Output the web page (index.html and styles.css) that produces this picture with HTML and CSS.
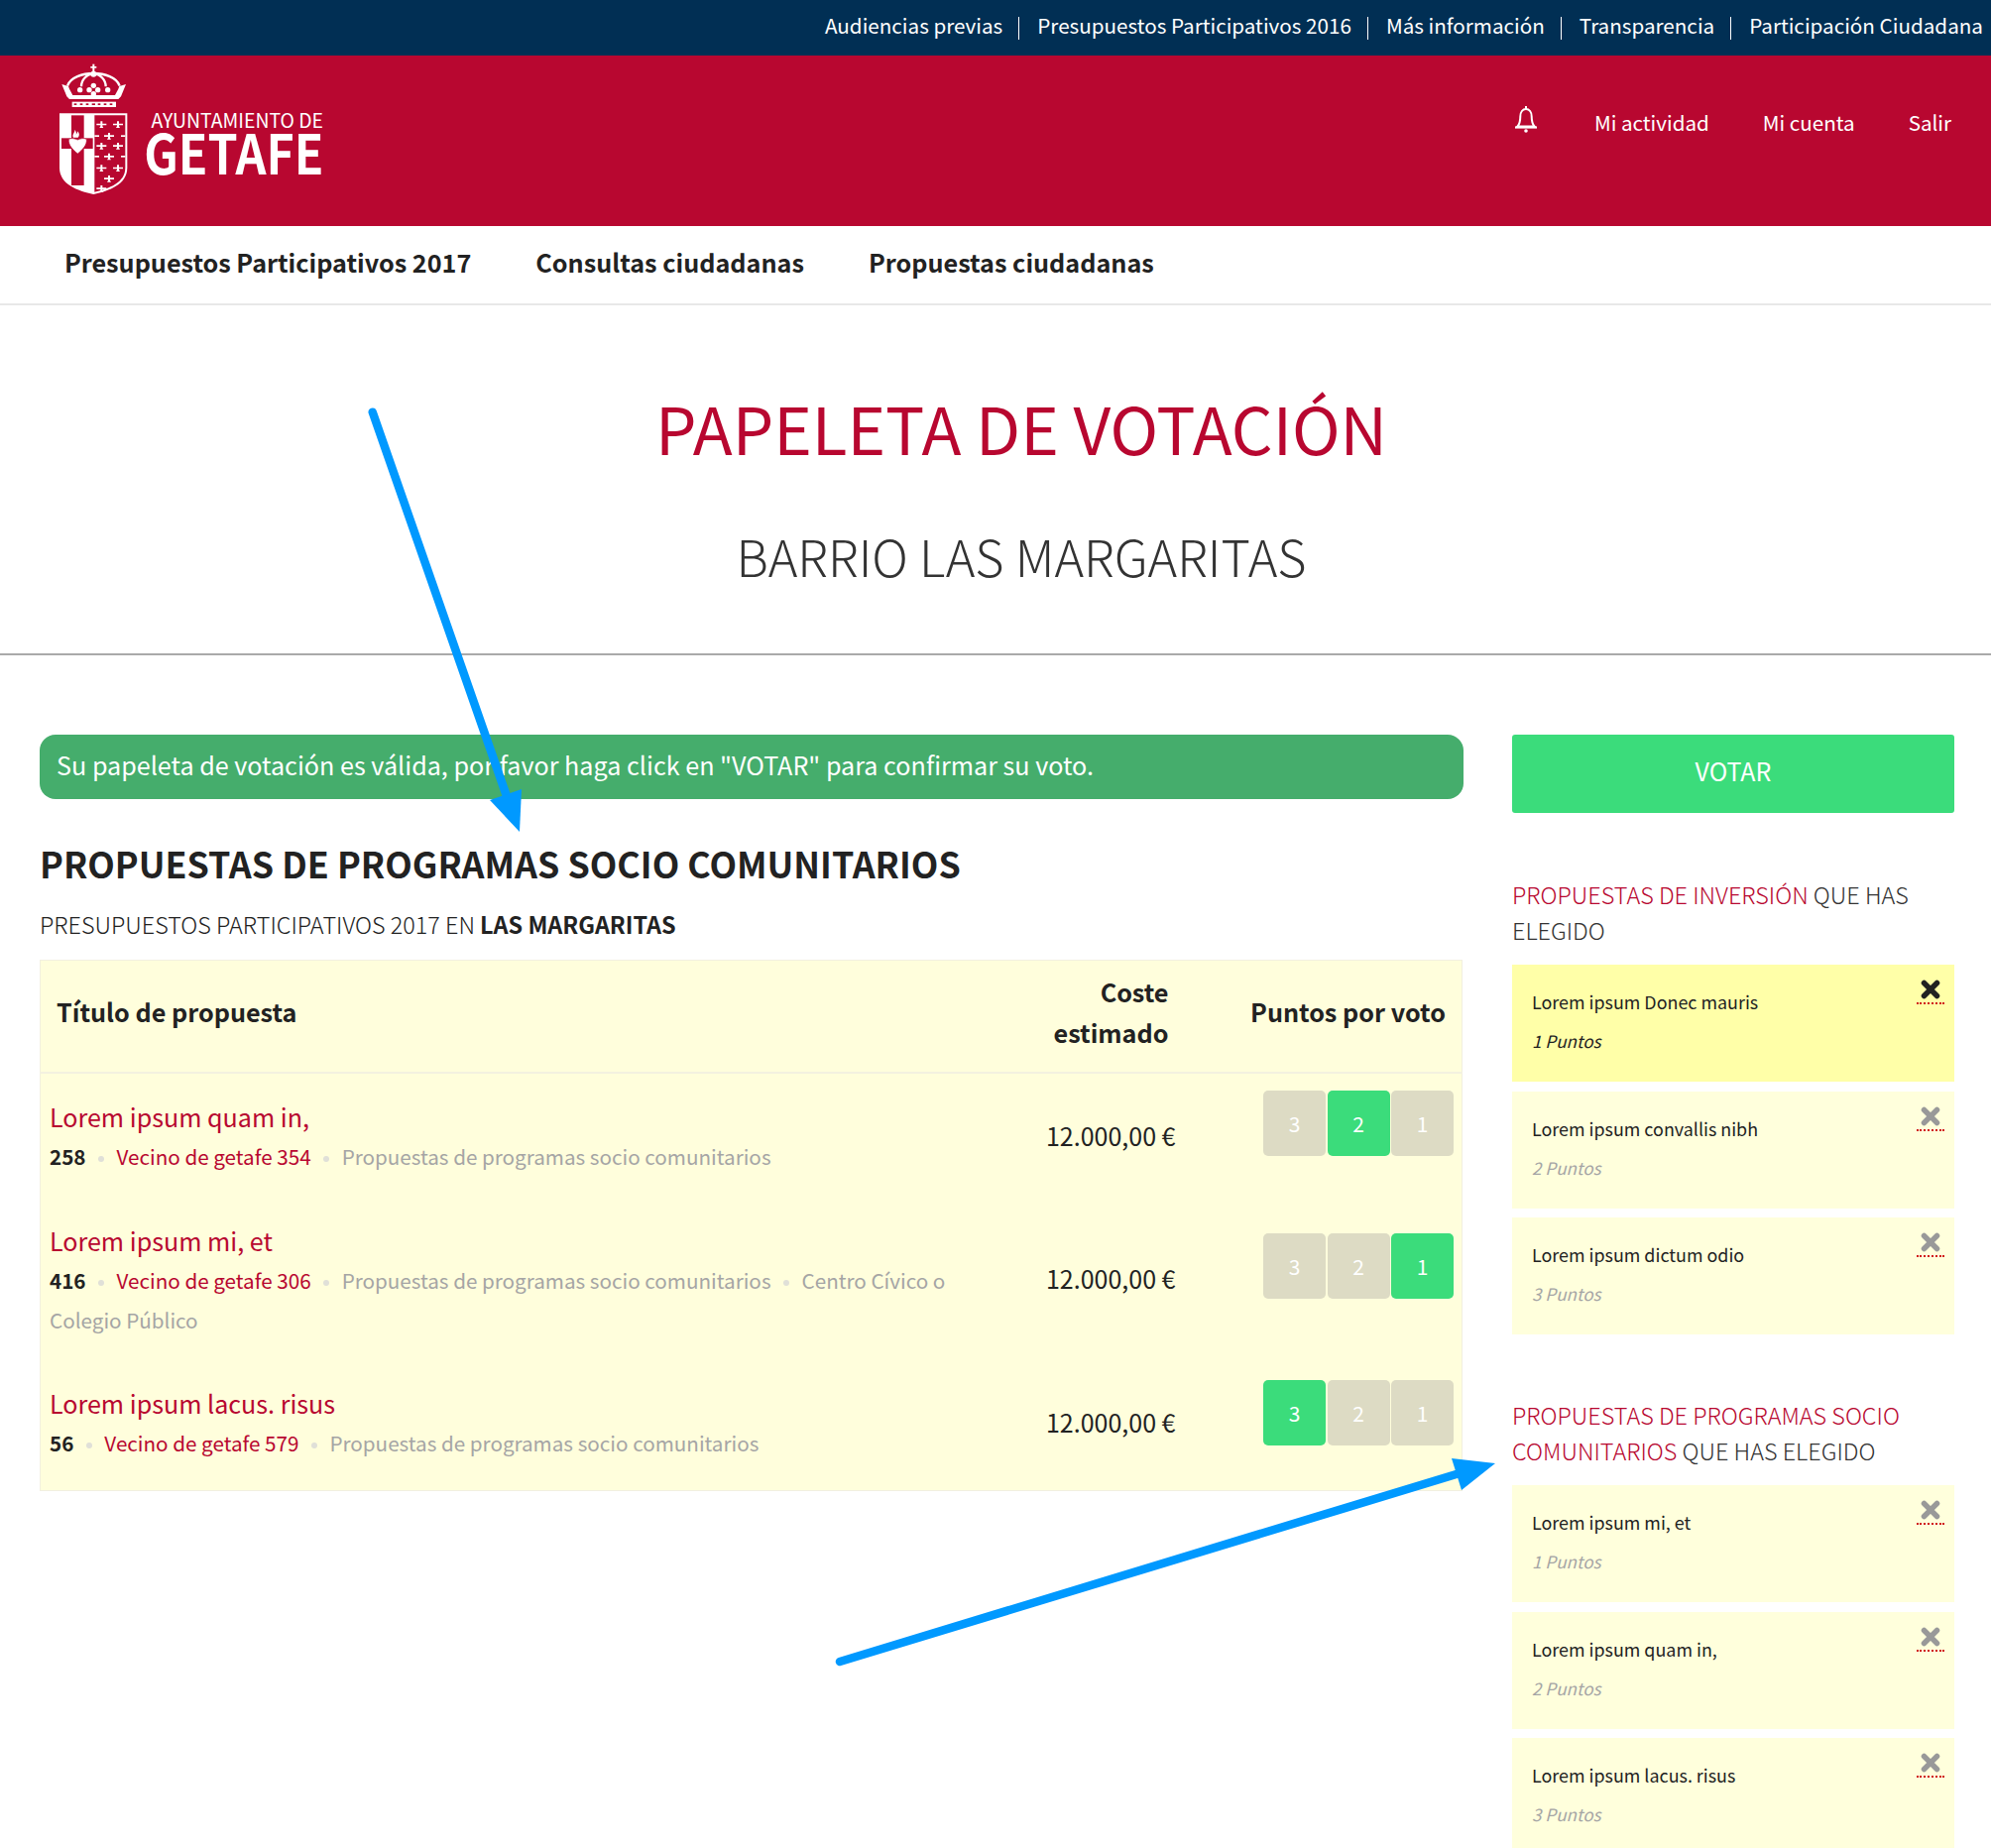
FILE: index.html
```html
<!DOCTYPE html>
<html lang="es">
<head>
<meta charset="utf-8">
<title>Papeleta de votación</title>
<link rel="stylesheet" href="styles.css">
</head>
<body>
<div class="topbar">
  <a>Audiencias previas</a><i></i><a>Presupuestos Participativos 2016</a><i></i><a>Más información</a><i></i><a>Transparencia</a><i></i><a>Participación Ciudadana</a>
</div>
<header class="brand">
  <div class="logo">
    <svg class="shield" viewBox="0 0 270 450" width="90" height="150">
      <defs>
        <path id="pl" d="M141 -9h6v7h12v5h-12v3l3 5h-12l3-5v-3h-12v-5h12z"/>
      </defs>
      <g fill="#fff">
        <rect x="130" y="26" width="6" height="24"/><rect x="124" y="33" width="18" height="5"/>
        <circle cx="133" cy="56" r="9"/>
      </g>
      <g fill="none" stroke="#fff" stroke-width="7">
        <path d="M54 92C62 66 100 54 133 54s71 12 79 38"/>
        <path d="M96 94c0-20 16-38 37-38s37 18 37 38"/>
      </g>
      <g fill="#fff">
        <path d="M37 87l20 6 3 8 10 19h128l10-19 3-8 20-6-15 37-8 8H60l-8-8z"/>
        <circle cx="92" cy="104" r="8"/><circle cx="176" cy="104" r="8"/><circle cx="133" cy="91" r="8"/><circle cx="120" cy="104" r="8"/><circle cx="146" cy="104" r="8"/><circle cx="133" cy="116" r="8"/>
        <rect x="68" y="140" width="133" height="16"/>
        <path d="M30 175h205v165c0 50-55 70-102 80-48-10-103-30-103-80z"/>
      </g>
      <g fill="#b80730">
        <rect x="74" y="145" width="8" height="5"/><rect x="92" y="145" width="8" height="5"/><rect x="110" y="145" width="8" height="5"/><rect x="128" y="145" width="10" height="5"/><rect x="146" y="145" width="8" height="5"/><rect x="164" y="145" width="8" height="5"/><rect x="182" y="145" width="8" height="5"/>
        <path d="M136 181h93v159c0 45-49 63-93 73z"/>
        <rect x="66" y="181" width="38" height="212"/>
        <rect x="36" y="250" width="95" height="32"/>
      </g>
      <path d="M58 253c8-4 18-2 27 2 9-4 19-6 27-2 2 18-12 32-27 44-15-12-29-26-27-44z" fill="#fff" stroke="#b80730" stroke-width="2"/>
      <path d="M72 248c-5-9 4-14 5-24 3 6 5 10 3 15 3-3 5-7 5-10 6 7 6 15 1 19z" fill="#fff"/>
      <g fill="#fff">
        <use href="#pl" y="208" x="13"/><use href="#pl" y="208" x="63"/>
        <use href="#pl" y="243" x="36"/>
        <rect x="136" y="241" width="14" height="5"/><rect x="216" y="241" width="13" height="5"/>
        <use href="#pl" y="273" x="13"/><use href="#pl" y="273" x="63"/>
        <use href="#pl" y="305" x="36"/>
        <rect x="136" y="303" width="14" height="5"/><rect x="216" y="303" width="13" height="5"/>
        <use href="#pl" y="340" x="13"/><use href="#pl" y="340" x="63"/>
        <use href="#pl" y="372" x="36"/>
        <use href="#pl" y="402" x="13"/>
      </g>
    </svg>
    <div class="logo-text">
      <span class="logo-small">AYUNTAMIENTO DE</span>
      <span class="logo-big">GETAFE</span>
    </div>
  </div>
  <nav class="user-nav">
    <svg class="bell" viewBox="0 0 24 28" width="24" height="28"><path d="M12 1v3M3.500 21.500c2.500-3 2.800-6 2.800-10 0-4.500 2.400-7.500 5.700-7.500s5.700 3 5.700 7.500c0 4 .3 7 2.800 10z" fill="none" stroke="#fff" stroke-width="2"/><path d="M1 22.500h22" stroke="#fff" stroke-width="2.200"/><circle cx="12" cy="26" r="1.800" fill="#fff"/></svg>
    <a>Mi actividad</a><a>Mi cuenta</a><a>Salir</a>
  </nav>
</header>
<nav class="mainnav">
  <a>Presupuestos Participativos 2017</a><a>Consultas ciudadanas</a><a>Propuestas ciudadanas</a>
</nav>
<section class="hero">
  <h1>PAPELETA DE VOTACIÓN</h1>
  <h2>BARRIO LAS MARGARITAS</h2>
</section>
<main class="layout">
  <div class="left">
    <div class="alert">Su papeleta de votación es válida, por favor haga click en "VOTAR" para confirmar su voto.</div>
    <h3 class="section-title">PROPUESTAS DE PROGRAMAS SOCIO COMUNITARIOS</h3>
    <p class="subtitle">PRESUPUESTOS PARTICIPATIVOS 2017 EN <strong>LAS MARGARITAS</strong></p>
    <table class="ballot">
      <thead>
        <tr><th class="th-title">Título de propuesta</th><th class="th-cost">Coste estimado</th><th class="th-pts">Puntos por voto</th></tr>
      </thead>
      <tbody>
        <tr class="row-first">
          <td class="td-title"><a class="prop">Lorem ipsum quam in,</a>
            <div class="meta"><b>258</b><u></u><a>Vecino de getafe 354</a><u></u><span>Propuestas de programas socio comunitarios</span></div></td>
          <td class="td-cost">12.000,00 €</td>
          <td class="td-pts"><div class="votes"><span>3</span><span class="on">2</span><span>1</span></div></td>
        </tr>
        <tr class="row-mid">
          <td class="td-title"><a class="prop">Lorem ipsum mi, et</a>
            <div class="meta"><b>416</b><u></u><a>Vecino de getafe 306</a><u></u><span>Propuestas de programas socio comunitarios</span><u></u><span>Centro Cívico o Colegio Público</span></div></td>
          <td class="td-cost">12.000,00 €</td>
          <td class="td-pts"><div class="votes"><span>3</span><span>2</span><span class="on">1</span></div></td>
        </tr>
        <tr class="row-last">
          <td class="td-title"><a class="prop">Lorem ipsum lacus. risus</a>
            <div class="meta"><b>56</b><u></u><a>Vecino de getafe 579</a><u></u><span>Propuestas de programas socio comunitarios</span></div></td>
          <td class="td-cost">12.000,00 €</td>
          <td class="td-pts"><div class="votes"><span class="on">3</span><span>2</span><span>1</span></div></td>
        </tr>
      </tbody>
    </table>
  </div>
  <aside class="right">
    <a class="vote-btn">VOTAR</a>
    <h4 class="side-title"><em>PROPUESTAS DE INVERSIÓN</em> QUE HAS ELEGIDO</h4>
    <div class="card hot"><p>Lorem ipsum Donec mauris</p><small>1 Puntos</small><a class="x"><svg viewBox="0 0 20 20" width="20" height="20"><path d="M3.500 3.500l13 13M16.500 3.500l-13 13"/></svg></a></div>
    <div class="card"><p>Lorem ipsum convallis nibh</p><small>2 Puntos</small><a class="x"><svg viewBox="0 0 20 20" width="20" height="20"><path d="M3.500 3.500l13 13M16.500 3.500l-13 13"/></svg></a></div>
    <div class="card"><p>Lorem ipsum dictum odio</p><small>3 Puntos</small><a class="x"><svg viewBox="0 0 20 20" width="20" height="20"><path d="M3.500 3.500l13 13M16.500 3.500l-13 13"/></svg></a></div>
    <h4 class="side-title second"><em>PROPUESTAS DE PROGRAMAS SOCIO COMUNITARIOS</em> QUE HAS ELEGIDO</h4>
    <div class="card"><p>Lorem ipsum mi, et</p><small>1 Puntos</small><a class="x"><svg viewBox="0 0 20 20" width="20" height="20"><path d="M3.500 3.500l13 13M16.500 3.500l-13 13"/></svg></a></div>
    <div class="card"><p>Lorem ipsum quam in,</p><small>2 Puntos</small><a class="x"><svg viewBox="0 0 20 20" width="20" height="20"><path d="M3.500 3.500l13 13M16.500 3.500l-13 13"/></svg></a></div>
    <div class="card"><p>Lorem ipsum lacus. risus</p><small>3 Puntos</small><a class="x"><svg viewBox="0 0 20 20" width="20" height="20"><path d="M3.500 3.500l13 13M16.500 3.500l-13 13"/></svg></a></div>
  </aside>
</main>
<svg class="arrows" viewBox="0 0 2008 1864" width="2008" height="1864">
  <path d="M375.700 415.700L512 806M847 1676L1472 1486" fill="none" stroke="#0099ff" stroke-width="8.500" stroke-linecap="round"/>
  <path d="M526 796L494 807L524 839z" fill="#0099ff"/>
  <path d="M1464 1471L1508 1476L1474 1503z" fill="#0099ff"/>
</svg>
</body>
</html>
```
FILE: styles.css
```css
* { box-sizing: border-box; }
html, body { margin: 0; padding: 0; }
body {
  position: relative;
  height: 1864px;
  overflow: hidden;
  background: #fff;
  color: #222;
  font-family: "Noto Sans CJK SC", "Noto Sans", sans-serif;
  font-size: 21px;
}
.topbar {
  height: 56px;
  background: #012f54;
  color: #fff;
  display: flex;
  justify-content: flex-end;
  align-items: center;
  font-size: 20.650px;
  padding: 0 8px 7px 0;
}
.topbar i { width: 1px; height: 23px; margin: 7px 18px 0 16px; background: #fff; }
.brand {
  height: 172px;
  background: #b80730;
  display: flex;
  justify-content: space-between;
  color: #fff;
}
.logo { display: flex; padding-left: 50px; }
.shield { display: block; }
.logo-text { width: 179px; margin: 53px 0 0 7px; display: flex; flex-direction: column; align-items: flex-end; }
.logo-small { font-size: 19.400px; line-height: 24px; white-space: nowrap; }
.logo-big { font-size: 55px; line-height: 54px; margin-top: -8px; font-weight: 700; transform: scaleX(.878); transform-origin: right center; }
.user-nav { display: flex; align-items: center; padding-right: 40px; height: 133px; font-size: 20.600px; gap: 54px; }
.bell { margin-right: 3px; margin-top: -6px; }
.mainnav {
  height: 80px;
  border-bottom: 2px solid #e8e8e8;
  display: flex;
  align-items: center;
  gap: 65px;
  padding: 0 0 6px 65px;
  font-size: 25.200px;
  font-weight: 700;
}
.hero { height: 353px; padding-left: 52px; border-bottom: 2px solid #aaa; text-align: center; }
.hero h1 { margin: 0; padding-top: 78px; font-size: 65.600px; line-height: 90px; font-weight: 400; color: #b80730; }
.hero h2 { margin: 50px 0 0; font-size: 50.400px; line-height: 70px; font-weight: 300; color: #333; }
.layout { display: flex; gap: 49px; padding: 80px 37px 0 40px; }
.left { width: 1436px; flex: none; }
.right { width: 446px; flex: none; }
.alert {
  height: 65px;
  background: #45ad6c;
  color: #fff;
  border-radius: 16px;
  padding: 0 17px;
  font-size: 25.150px;
  line-height: 61px;
}
.section-title { margin: 40px 0 0; font-size: 35.800px; line-height: 48px; font-weight: 700; color: #222; }
.subtitle { margin: 18px 0 0; font-size: 23.400px; line-height: 40px; font-weight: 300; color: #222; }
.subtitle strong { font-weight: 700; }
.ballot {
  margin-top: 16px;
  width: 1434px;
  table-layout: fixed;
  border-collapse: collapse;
  background: #fffedc;
  border: 1px solid #f2f0e0;
}
.ballot th { font-size: 25.200px; line-height: 41px; font-weight: 700; padding: 8px 16px 16px; height: 113px; border-bottom: 2px solid #f3f1e0; }
.th-title { text-align: left; width: 960px; }
.th-cost { text-align: right; width: 195px; padding-right: 17px !important; }
.th-pts { text-align: right; width: 279px; padding-right: 16px !important; }
.ballot td { vertical-align: middle; }
.td-title { padding: 23px 40px 23px 9px; }
.row-first .td-title { padding-bottom: 22px; }
.row-mid .td-title { padding-bottom: 20px; }
.row-last .td-title { padding: 24px 40px 28px 9px; }
.row-last .td-cost { padding-bottom: 6px; }
.prop { display: block; color: #b80730; font-size: 25.100px; line-height: 40px; }
.meta { font-size: 20.650px; line-height: 40px; color: #a5a5a5; }
.meta b { color: #222; font-weight: 700; }
.meta a { color: #b80730; }
.meta u { display: inline-block; width: 6px; height: 6px; margin: 0 12.500px; border-radius: 50%; background: #e0e0d8; vertical-align: middle; }
.td-cost { font-size: 25px; text-align: right; padding-right: 10px; }
.votes { display: flex; gap: 1.500px; justify-content: flex-end; padding-right: 7px; margin-bottom: 24px; }
.votes span {
  width: 63px; height: 66px;
  background: #dddbc4;
  color: #fff;
  border-radius: 5px;
  display: flex; align-items: center; justify-content: center;
  font-size: 21px;
}
.votes .on { background: #3bdc7b; }
.vote-btn {
  display: flex; align-items: center; justify-content: center;
  height: 79px;
  padding-bottom: 7px;
  background: #3bdc7b;
  color: #fff;
  border-radius: 3px;
  font-size: 25px;
}
.side-title { margin: 64px 0 17px; font-size: 23.400px; line-height: 36px; font-weight: 300; color: #333; }
.side-title em { font-style: normal; color: #b80730; }
.side-title.second { margin-top: 63px; }
.card { position: relative; height: 118px; margin-bottom: 9.500px; background: #ffffdc; padding: 17px 20px 0; }
.card.hot { background: #ffffa8; }
.card p { margin: 0; font-size: 17.900px; line-height: 40px; color: #222; }
.card small { display: block; font-size: 17.100px; line-height: 40px; font-style: italic; color: #a5a5a5; }
.card.hot small { color: #222; }
.x {
  position: absolute; top: 15px; right: 10px; width: 28px; height: 25px;
  display: flex; justify-content: center;
  color: #999;
  border-bottom: 2px dotted #d01818;
}
.x svg { fill: none; stroke: currentColor; stroke-width: 5.500; stroke-linecap: round; }
.card.hot .x { color: #222; }
.arrows { position: absolute; top: 0; left: 0; pointer-events: none; }
```
